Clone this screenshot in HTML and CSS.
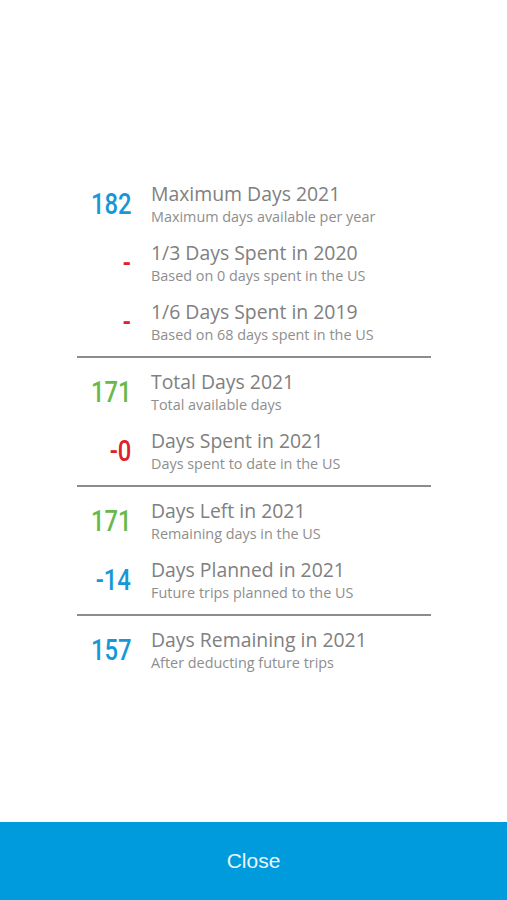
FILE: index.html
```html
<!DOCTYPE html>
<html>
<head>
<meta charset="utf-8">
<link rel="stylesheet" href="styles.css">
</head>
<body>
<div class="screen">
  <main class="content">
    <section class="group">
      <div class="row">
        <div class="num blue"><span>182</span></div>
        <div class="text"><div class="title">Maximum Days 2021</div><div class="sub">Maximum days available per year</div></div>
      </div>
      <div class="row">
        <div class="num red"><span>-</span></div>
        <div class="text"><div class="title">1/3 Days Spent in 2020</div><div class="sub">Based on 0 days spent in the US</div></div>
      </div>
      <div class="row">
        <div class="num red"><span>-</span></div>
        <div class="text"><div class="title">1/6 Days Spent in 2019</div><div class="sub">Based on 68 days spent in the US</div></div>
      </div>
    </section>
    <hr class="divider">
    <section class="group">
      <div class="row">
        <div class="num green"><span>171</span></div>
        <div class="text"><div class="title">Total Days 2021</div><div class="sub">Total available days</div></div>
      </div>
      <div class="row">
        <div class="num red"><span>-0</span></div>
        <div class="text"><div class="title">Days Spent in 2021</div><div class="sub">Days spent to date in the US</div></div>
      </div>
    </section>
    <hr class="divider">
    <section class="group">
      <div class="row">
        <div class="num green"><span>171</span></div>
        <div class="text"><div class="title">Days Left in 2021</div><div class="sub">Remaining days in the US</div></div>
      </div>
      <div class="row">
        <div class="num blue"><span>-14</span></div>
        <div class="text"><div class="title">Days Planned in 2021</div><div class="sub">Future trips planned to the US</div></div>
      </div>
    </section>
    <hr class="divider">
    <section class="group">
      <div class="row">
        <div class="num blue"><span>157</span></div>
        <div class="text"><div class="title">Days Remaining in 2021</div><div class="sub">After deducting future trips</div></div>
      </div>
    </section>
  </main>
  <button class="close">Close</button>
</div>
</body>
</html>
```
FILE: styles.css
```css
html, body {
  margin: 0;
  padding: 0;
  background: #fff;
}
.screen {
  width: 507px;
  height: 900px;
  display: flex;
  flex-direction: column;
  font-family: "Open Sans", sans-serif;
}
.content {
  flex: 1;
  padding: 181px 76px 0 77px;
}
.group {
  display: flex;
  flex-direction: column;
  gap: 14px;
}
.row {
  display: flex;
  align-items: center;
  height: 45px;
}
.num {
  width: 54px;
  flex: none;
  text-align: right;
  font-family: Roboto, "DejaVu Sans Condensed", sans-serif;
  font-weight: 500;
  font-size: 29px;
  line-height: 42px;
  margin-right: 20px;
}
.num span {
  display: inline-block;
  transform: scaleX(0.82);
  transform-origin: right center;
}
.blue { color: #1797d6; }
.green { color: #69b94a; }
.red { color: #e0202a; }
.text {
  display: flex;
  flex-direction: column;
}
.title {
  font-size: 19.4px;
  line-height: 26px;
  color: #808080;
}
.sub {
  font-size: 14.4px;
  line-height: 19px;
  color: #8e8e8e;
}
.divider {
  border: 0;
  height: 2px;
  background: #8c8c8c;
  margin: 12px 0 11px;
}
.close {
  height: 78px;
  flex: none;
  border: 0;
  background: #009bdd;
  color: #e9f6fd;
  font-family: "Liberation Sans", Arial, sans-serif;
  font-size: 21px;
  padding: 0;
  margin: 0;
}
```
